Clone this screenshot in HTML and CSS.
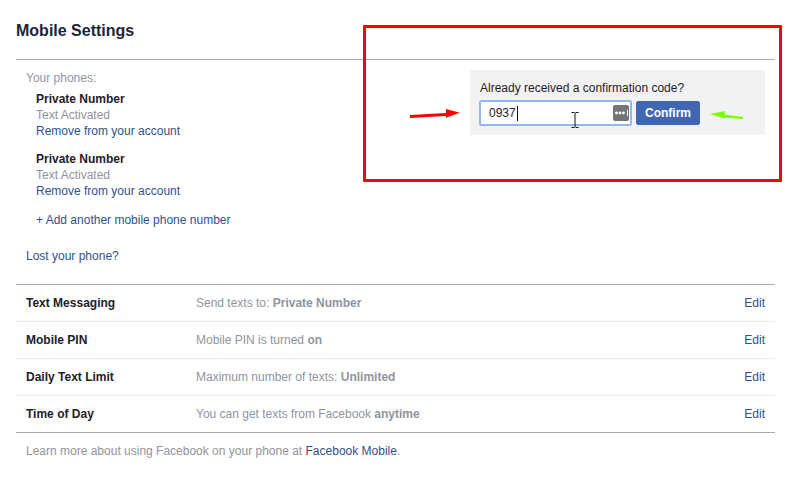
FILE: index.html
```html
<!DOCTYPE html>
<html lang="en">
<head>
<meta charset="utf-8">
<title>Mobile Settings</title>
<link rel="stylesheet" href="styles.css">
</head>
<body>
<main class="page">
  <h1 class="title">Mobile Settings</h1>
  <section class="phones">
    <div class="phone-list">
      <div class="muted label">Your phones:</div>
      <div class="phone">
        <div class="strong">Private Number</div>
        <div class="muted">Text Activated</div>
        <a class="link" href="#">Remove from your account</a>
      </div>
      <div class="phone">
        <div class="strong">Private Number</div>
        <div class="muted">Text Activated</div>
        <a class="link" href="#">Remove from your account</a>
      </div>
      <div class="add"><a class="link" href="#">+ Add another mobile phone number</a></div>
      <div class="lost"><a class="link" href="#">Lost your phone?</a></div>
    </div>
    <div class="confirm-panel">
      <div class="confirm-label">Already received a confirmation code?</div>
      <div class="confirm-row">
        <div class="code-input">
          <span class="code-value">0937</span><span class="caret"></span>
          <span class="key-badge"><svg width="16" height="16" viewBox="0 0 16 16"><rect width="16" height="16" rx="2" fill="#757575"/><circle cx="3.5" cy="8" r="1.4" fill="#fff"/><circle cx="7" cy="8" r="1.4" fill="#fff"/><circle cx="10.5" cy="8" r="1.4" fill="#fff"/><rect x="14" y="5" width="1" height="6" fill="#fff"/></svg></span>
        </div>
        <button class="confirm-btn" type="button">Confirm</button>
      </div>
    </div>
  </section>
  <section class="settings">
    <div class="row"><div class="row-name">Text Messaging</div><div class="row-desc">Send texts to: <b>Private Number</b></div><a class="link" href="#">Edit</a></div>
    <div class="row"><div class="row-name">Mobile PIN</div><div class="row-desc">Mobile PIN is turned <b>on</b></div><a class="link" href="#">Edit</a></div>
    <div class="row"><div class="row-name">Daily Text Limit</div><div class="row-desc">Maximum number of texts: <b>Unlimited</b></div><a class="link" href="#">Edit</a></div>
    <div class="row"><div class="row-name">Time of Day</div><div class="row-desc">You can get texts from Facebook <b>anytime</b></div><a class="link" href="#">Edit</a></div>
  </section>
  <p class="footer">Learn more about using Facebook on your phone at <a class="link" href="#">Facebook Mobile</a>.</p>
</main>

<div class="red-frame"></div>
<svg class="arrow arrow-red" width="52" height="12" viewBox="0 0 52 12"><path d="M0 7 L36 5 L36 1 L50 4.7 L36 9.7 L36 8 L0 10 Z" fill="#f00"/></svg>
<svg class="arrow arrow-green" width="36" height="12" viewBox="0 0 36 12"><path d="M0 4 L15 1 L14.5 4.5 L33 7 L33 9 L15 7.5 L15 8.5 Z" fill="#7cfc00"/></svg>
<svg class="arrow ibeam" width="8" height="16" viewBox="0 0 8 16"><path d="M0.5 0.5H3.5M4.5 0.5H7.5M4 1V15M0.5 15.5H3.5M4.5 15.5H7.5" stroke="#111" stroke-width="1" fill="none"/></svg>
</body>
</html>
```
FILE: styles.css
```css
* { box-sizing: border-box; }
html, body { margin: 0; padding: 0; background: #fff; }
body {
  width: 792px;
  height: 492px;
  overflow: hidden;
  position: relative;
  font-family: "Liberation Sans", Arial, sans-serif;
  font-size: 12px;
  line-height: 16px;
  color: #1d2129;
}
.page { padding: 0 17px 0 16px; }
.title {
  margin: 0;
  height: 60px;
  padding-top: 21px;
  border-bottom: 1px solid #aaa;
  font-size: 16px;
  line-height: 20px;
  font-weight: bold;
  color: #1c2438;
}
.phones {
  display: flex;
  justify-content: space-between;
  height: 224px;
  padding: 10px 10px 0;
}
.muted { color: #90949c; }
.strong { font-weight: bold; }
.link { color: #31508c; text-decoration: none; }
.label { margin-bottom: 5px; }
.phone { padding-left: 10px; margin-bottom: 12px; }
.phone .link { display: block; }
.add { margin-top: 13px; padding-left: 10px; }
.lost { margin-top: 20px; }
.confirm-panel {
  width: 295px;
  height: 65px;
  background: #f2f2f2;
  padding: 10px 9px;
}
.confirm-label { height: 20px; padding-left: 1px; }
.confirm-row { display: flex; align-items: center; gap: 4px; }
.code-input {
  position: relative;
  width: 153px;
  height: 26px;
  background: #fff;
  border: 1px solid #93b5f2;
  box-shadow: inset 0 0 0 1px #93b5f2;
  border-radius: 2px;
  padding-left: 9px;
  display: flex;
  align-items: center;
}
.caret { width: 1px; height: 15px; background: #111; margin-left: 1px; }
.key-badge { position: absolute; left: 133px; top: 4px; width: 16px; height: 16px; }
.key-badge svg { display: block; }
.confirm-btn {
  width: 64px;
  height: 24px;
  padding: 0;
  border: 1px solid #4267b2;
  border-radius: 2px;
  background: #4267b2;
  color: #fff;
  font: bold 12px/16px "Liberation Sans", Arial, sans-serif;
}
.settings { border-top: 1px solid #aaa; border-bottom: 1px solid #aaa; }
.row {
  display: flex;
  height: 37px;
  align-items: center;
  padding: 0 10px;
  border-top: 1px solid #e9ebee;
}
.row:first-child { border-top: 0; height: 36px; }
.row-name { width: 170px; font-weight: bold; }
.row-desc { flex: 1; color: #90949c; }
.footer { margin: 10px 0 0; padding-left: 10px; color: #90949c; }
.red-frame {
  position: absolute;
  left: 363px;
  top: 25px;
  width: 419px;
  height: 157px;
  border: 3px solid #f00;
  border-radius: 1px;
}
.arrow { position: absolute; display: block; }
.arrow-red { left: 410px; top: 108px; }
.arrow-green { left: 710px; top: 110px; }
.ibeam { left: 571px; top: 112px; }
```
